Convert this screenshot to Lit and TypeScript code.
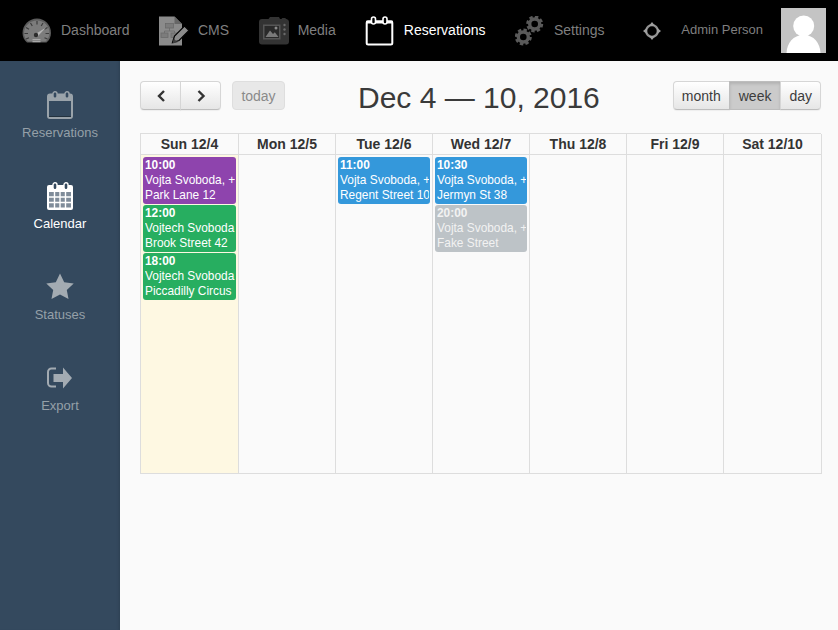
import { LitElement, html, css, svg } from "lit";
import { customElement } from "lit/decorators.js";

const gear = (x: number, y: number) => svg`
  <circle cx="${x}" cy="${y}" r="5" fill="none" stroke="#5a5a5a" stroke-width="3.400"/>
  <circle cx="${x}" cy="${y}" r="7.200" fill="none" stroke="#5a5a5a" stroke-width="2.600" stroke-dasharray="3.400 2.250"/>`;

const icons: Record<string, unknown> = {
  gauge: svg`<svg class="ic" viewBox="0 0 30 30"><path d="M5 26.500 C2 24 .5 20.500 .5 17 C.5 9 7 2.500 15 2.500 S29 9 29 17 C29 20.500 27.500 24 24.500 26.500 Z" fill="#5c5c5c"/><path d="M6 25.500 C3.500 23.500 2 20.500 2 17 C2 10 8 4.500 15 4.500 S27.500 10 27.500 17 C27.500 20.500 26 23.500 23.500 25.500 Z" fill="#7c7c7c"/><path d="M15 5v3.500M8.500 7l1.800 3M21 7l-1.800 3M4 11.500l3 1.800M25.500 11.500l-3 1.800M2.500 17.500h3.500M23.500 17.500h3.500M4 23l3-1.300M25.500 23l-3-1.300" stroke="#3c3c3c" stroke-width="1.200"/><path d="M13.500 18 L24 11.500 L15.500 20.500Z" fill="#b5b5b5"/><circle cx="14" cy="19" r="2.200" fill="#2c2c2c"/><rect x="10.500" y="23" width="8" height="1.200" fill="#a8a8a8"/><rect x="10.500" y="25" width="8" height="1.200" fill="#a8a8a8"/></svg>`,
  cms: svg`<svg class="ic" viewBox="0 0 30 30"><path d="M0 .5h15.500l7.500 7.500v21.500H0Z" fill="#8b8b8b"/><path d="M15.500 .5v7.500h7.500Z" fill="#666"/><g fill="#7c7c7c" stroke="#6a6a6a" stroke-width=".8"><rect x="6.500" y="7.500" width="8" height="4.500"/><rect x="2" y="17" width="7" height="4.500"/><rect x="12" y="17" width="7" height="4.500"/><path d="M10.500 12v3h-5v2M10.500 15h5v2" fill="none"/></g><path d="M13.500 26.500 L15.500 20 L25.500 10 L30 14.500 L20 24.500 Z" fill="#8b8b8b" stroke="#000" stroke-width="1.200"/><path d="M13.500 27.500l1.300-5 3.700 3.700z" fill="#3e3e3e"/></svg>`,
  media: svg`<svg class="ic" viewBox="0 0 30 30"><path d="M3 3h6.500l1.500-2h9l1 2h1.500l.8-1h3l.7 1h.5a3 3 0 0 1 2.500 3v19.500a3 3 0 0 1-3 3H3a3 3 0 0 1-3-3V6a3 3 0 0 1 3-3Z" fill="#333"/><rect x="4" y="8.500" width="17.500" height="15" fill="#565656"/><rect x="5.500" y="10" width="14.500" height="12" fill="#2a2a2a"/><path d="M6.500 21l4.500-6.500 3 3.500 1.800-1.800 3.700 4.800Z" fill="#7a7a7a"/><circle cx="17" cy="12" r="1.500" fill="#8a8a8a"/><circle cx="25.500" cy="9" r="1.200" fill="#6a6a6a"/><circle cx="25.500" cy="13.500" r="1.200" fill="#6a6a6a"/><circle cx="25.500" cy="18" r="1.200" fill="#6a6a6a"/></svg>`,
  cal: svg`<svg class="ic" viewBox="0 0 30 30"><rect x="1.700" y="5.500" width="25.600" height="23" rx="1.500" fill="none" stroke="#fff" stroke-width="2"/><rect x="1" y="4.500" width="27" height="3" fill="#fff" rx="1"/><rect x="6.500" y="1" width="4" height="7" rx="2" fill="#000" stroke="#fff" stroke-width="1.600"/><rect x="18" y="1" width="4" height="7" rx="2" fill="#000" stroke="#fff" stroke-width="1.600"/></svg>`,
  gears: svg`<svg class="ic" viewBox="0 0 30 30">${gear(19.7, 8)}${gear(8.3, 21)}</svg>`,
  target: svg`<svg class="ict" viewBox="0 0 18 18"><circle cx="9" cy="9" r="5.800" fill="none" stroke="#909090" stroke-width="2.200"/><path d="M5.800 4 9 0l3.200 4ZM5.800 14 9 18l3.200-4ZM4 5.800 0 9l4 3.200ZM14 5.800 18 9l-4 3.200Z" fill="#a0a0a0"/></svg>`,
  sideRes: svg`<svg class="sic" viewBox="0 0 28 28"><rect x="2" y="3.500" width="24" height="23.500" rx="2" fill="none" stroke="#9aa3aa" stroke-width="2"/><rect x="2" y="3" width="24" height="7" fill="#9aa3aa"/><path d="M3 25.500h22" stroke="#24333f" stroke-width="1"/><rect x="7" y=".8" width="4" height="6.500" rx="2" fill="#34495e" stroke="#9aa3aa" stroke-width="1.400"/><rect x="19" y=".8" width="4" height="6.500" rx="2" fill="#34495e" stroke="#9aa3aa" stroke-width="1.400"/></svg>`,
  sideCal: svg`<svg class="sic" viewBox="0 0 28 28"><rect x="1" y="3" width="26" height="25" rx="2" fill="#fff"/><rect x="3" y="10" width="22" height="15.500" fill="#7f8c9a"/><path d="M8.500 10v16M14 10v16M19.500 10v16M3 15h22M3 20.500h22" stroke="#fff" stroke-width="1.400"/><rect x="7" y=".8" width="4" height="7" rx="2" fill="#34495e" stroke="#fff" stroke-width="1.400"/><rect x="18" y=".8" width="4" height="7" rx="2" fill="#34495e" stroke="#fff" stroke-width="1.400"/></svg>`,
  star: svg`<svg class="sic" viewBox="0 0 28 28"><path d="M14 .5l4.200 8.700 9.500 1.300-6.900 6.600 1.700 8.900L14 21.600l-8.500 4.400 1.700-8.900L.3 10.500l9.500-1.300Z" fill="#a3abb2"/></svg>`,
  exportI: svg`<svg class="sic" viewBox="0 0 28 28"><path d="M10 4.500H5.500a3.500 3.500 0 0 0-3.500 3.500v11a3.500 3.500 0 0 0 3.500 3.500H10" fill="none" stroke="#a3abb2" stroke-width="2"/><path d="M7.500 10H17V3.500L26 14l-9 10.500V18H7.500Z" fill="#a3abb2"/></svg>`,
};

type Ev = { t: string; n: string; a: string; c: string };
const days: { h: string; today?: boolean; ev: Ev[] }[] = [
  { h: "Sun 12/4", today: true, ev: [
    { t: "10:00", n: "Vojta Svoboda, +", a: "Park Lane 12", c: "purple" },
    { t: "12:00", n: "Vojtech Svoboda", a: "Brook Street 42", c: "green" },
    { t: "18:00", n: "Vojtech Svoboda", a: "Piccadilly Circus", c: "green" },
  ] },
  { h: "Mon 12/5", ev: [] },
  { h: "Tue 12/6", ev: [{ t: "11:00", n: "Vojta Svoboda, +", a: "Regent Street 10", c: "blue" }] },
  { h: "Wed 12/7", ev: [
    { t: "10:30", n: "Vojta Svoboda, +", a: "Jermyn St 38", c: "blue" },
    { t: "20:00", n: "Vojta Svoboda, +", a: "Fake Street", c: "gray" },
  ] },
  { h: "Thu 12/8", ev: [] },
  { h: "Fri 12/9", ev: [] },
  { h: "Sat 12/10", ev: [] },
];

@customElement("app-root")
export class AppRoot extends LitElement {
  static styles = css`
    :host { display: block; width: 838px; height: 630px; overflow: hidden; font-family: "Liberation Sans", Arial, sans-serif; font-size: 14px; background: #fafafa; }
    .top { height: 61px; background: #000; display: flex; align-items: center; padding: 0 12px 0 22px; box-sizing: border-box; }
    .nav { display: flex; gap: 29.500px; align-items: center; }
    .ni { display: flex; align-items: center; gap: 9px; color: #7f7f7f; }
    .ni span { padding-bottom: 1px; }
    .ni.on { color: #fff; }
    .ni.on { gap: 8.500px; }
    .ic { width: 30px; height: 30px; display: block; }
    .ict { width: 18px; height: 18px; display: block; }
    .user { margin-left: auto; display: flex; align-items: center; color: #7f7f7f; font-size: 13px; }
    .user span { margin: 0 18px 2px 20px; }
    .ava { width: 45px; height: 45px; display: block; }
    .main { display: flex; height: 569px; }
    .side { width: 120px; flex: none; background: #34495e; box-shadow: inset -3px 0 3px -2px rgba(0,0,0,.12); display: flex; flex-direction: column; align-items: center; padding-top: 29.500px; box-sizing: border-box; gap: 36px; font-size: 13px; color: #95a0a8; }
    .si { display: flex; flex-direction: column; align-items: center; gap: 6.500px; height: 55px; line-height: 15px; }
    .si.on { color: #fff; }
    .sic { width: 28px; height: 28px; display: block; }
    .content { flex: 1; padding: 20px 17px 0 20px; box-sizing: border-box; }
    .bar { display: flex; align-items: flex-start; height: 30px; margin-bottom: 22px; }
    .grp { display: flex; }
    .btn { height: 29px; box-sizing: border-box; border: 1px solid #d6d6d6; border-bottom-color: #bdbdbd; background: linear-gradient(#fff, #e6e6e6); color: #3c3c3c; display: flex; align-items: center; justify-content: center; padding: 0 8px; box-shadow: 0 1px 1px rgba(0,0,0,.05); }
    .btn + .btn { margin-left: -1px; }
    .btn:first-child { border-radius: 4px 0 0 4px; }
    .btn:last-child { border-radius: 0 4px 4px 0; }
    .arrow { width: 41px; padding: 0; }
    .arrow svg { width: 10px; height: 14px; display: block; }
    .today { margin-left: 11px; width: 53px; padding: 0; border-radius: 4px; color: #8a8a8a; background: #e8e8e8; border-color: #dedede; box-shadow: none; }
    .active { background: #cbcbcb; border-color: #bdbdbd; box-shadow: inset 0 2px 3px rgba(0,0,0,.12); padding: 0 9px; }
    h2 { flex: 1; margin: 0; font-weight: 400; font-size: 30px; line-height: 34px; color: #3a3a3a; text-align: center; }
    .cal { display: grid; grid-template-columns: 98px 97px 97px 97px 97px 97px 98px; width: 681px; height: 341px; box-sizing: border-box; border-top: 1px solid #ddd; border-left: 1px solid #ddd; grid-template-rows: 21px 1fr; }
    .hd { border-right: 1px solid #ddd; border-bottom: 1px solid #ddd; text-align: center; font-weight: 700; color: #333; line-height: 21px; box-sizing: border-box; }
    .day { border-right: 1px solid #ddd; border-bottom: 1px solid #ddd; padding: 2px 2px 0 2px; display: flex; flex-direction: column; box-sizing: border-box; min-width: 0; }
    .day.today-col { background: #fef8e2; }
    .ev { height: 47px; margin-bottom: 1px; border-radius: 3px; padding: 1px 1.500px 0 2px; box-sizing: border-box; color: #fff; font-size: 11.900px; line-height: 15px; white-space: nowrap; overflow: hidden; }
    .ev b, .ev div { display: block; overflow: hidden; }
    .purple { background: #8e44ad; }
    .green { background: #27ae60; }
    .blue { background: #3498db; }
    .gray { background: #bdc3c7; color: #f2f2f2; }
  `;

  render() {
    const nav = [
      ["gauge", "Dashboard"], ["cms", "CMS"], ["media", "Media"], ["cal", "Reservations"], ["gears", "Settings"],
    ];
    const side = [
      ["sideRes", "Reservations"], ["sideCal", "Calendar"], ["star", "Statuses"], ["exportI", "Export"],
    ];
    return html`
      <div class="top">
        <div class="nav">
          ${nav.map(([i, l]) => html`<div class="ni ${l === "Reservations" ? "on" : ""}">${icons[i]}<span>${l}</span></div>`)}
        </div>
        <div class="user">
          ${icons.target}<span>Admin Person</span>
          <svg class="ava" viewBox="0 0 45 45"><rect width="45" height="45" fill="#c4c4c4"/><circle cx="22.700" cy="18" r="10.500" fill="#fff"/><path d="M5.500 45C6 35 12 27 22.700 27 33 27 39 35 39.500 45Z" fill="#fff"/></svg>
        </div>
      </div>
      <div class="main">
        <div class="side">
          ${side.map(([i, l]) => html`<div class="si ${l === "Calendar" ? "on" : ""}">${icons[i]}<span>${l}</span></div>`)}
        </div>
        <div class="content">
          <div class="bar">
            <div class="grp">
              <div class="btn arrow"><svg viewBox="0 0 10 14"><path d="M8 2 3 7l5 5" fill="none" stroke="#333" stroke-width="2.400"/></svg></div>
              <div class="btn arrow"><svg viewBox="0 0 10 14"><path d="M2.500 2l5 5-5 5" fill="none" stroke="#333" stroke-width="2.400"/></svg></div>
            </div>
            <div class="btn today">today</div>
            <h2>Dec 4 — 10, 2016</h2>
            <div class="grp">
              <div class="btn">month</div>
              <div class="btn active">week</div>
              <div class="btn">day</div>
            </div>
          </div>
          <div class="cal">
            ${days.map((d) => html`<div class="hd">${d.h}</div>`)}
            ${days.map((d) => html`<div class="day ${d.today ? "today-col" : ""}">
              ${d.ev.map((e) => html`<div class="ev ${e.c}"><b>${e.t}</b><div>${e.n}</div><div>${e.a}</div></div>`)}
            </div>`)}
          </div>
        </div>
      </div>
    `;
  }
}
